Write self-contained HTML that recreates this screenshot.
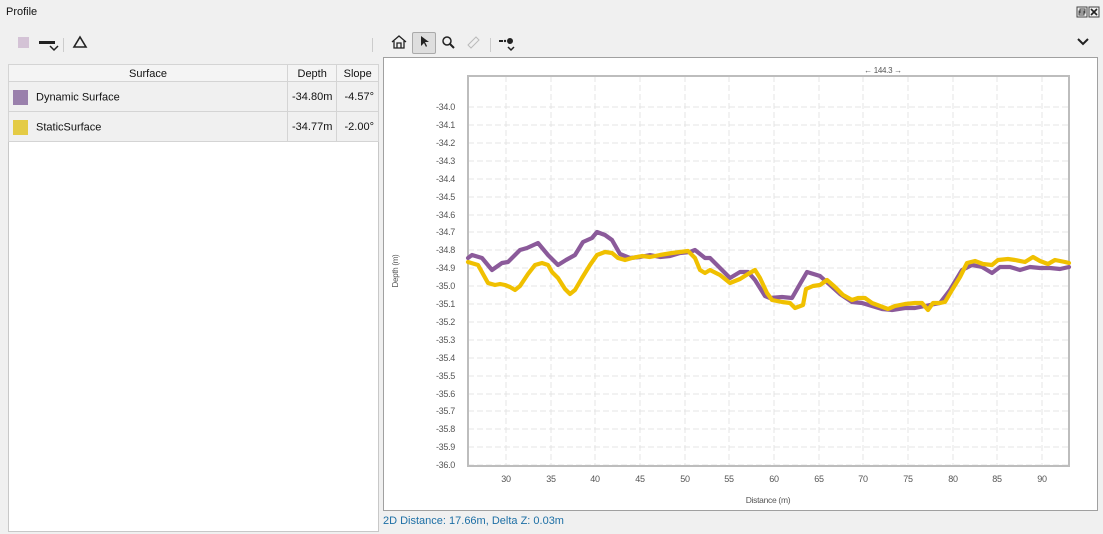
<!DOCTYPE html>
<html><head><style>
body{margin:0;width:1103px;height:534px;background:#f0f0f0;font-family:"Liberation Sans",sans-serif;position:relative;overflow:hidden;font-size:11px;color:#111}
.a{position:absolute}
table{border-collapse:collapse;font-size:11px}
td{border:1px solid #d4d4d4;padding:1px 4px 0}
</style></head><body>
<div class="a" style="left:6px;top:6px;font-size:11px">Profile</div>
<svg class="a" style="left:1076px;top:6px" width="26" height="12"><rect x="1" y="1" width="10" height="10" fill="none" stroke="#444"/><rect x="3" y="5" width="5" height="4" fill="none" stroke="#444"/><rect x="4" y="3" width="5" height="4" fill="none" stroke="#444"/><rect x="13" y="1" width="10" height="10" fill="none" stroke="#444"/><path d="M15 3l6 6M21 3l-6 6" stroke="#222" stroke-width="1.6"/></svg>
<div class="a" style="left:18px;top:37px;width:11px;height:11px;background:#d4c3d6"></div>
<div class="a" style="left:39px;top:41px;width:16px;height:3px;background:#222"></div>
<svg class="a" style="left:49px;top:45px" width="10" height="7"><path d="M1 1l4 4 4-4" fill="none" stroke="#222" stroke-width="1.5"/></svg>
<div class="a" style="left:63px;top:38px;width:1px;height:14px;background:#ccc"></div>
<svg class="a" style="left:72px;top:35px" width="16" height="14"><path d="M8 2L2 12h12z" fill="none" stroke="#222" stroke-width="1.6"/></svg>
<div class="a" style="left:372px;top:38px;width:1px;height:14px;background:#ccc"></div>
<svg class="a" style="left:390px;top:34px" width="18" height="16"><path d="M2 8L9 2l7 6M4 7v7h10V7M7 14V9h4v5" fill="none" stroke="#222" stroke-width="1.3"/></svg>
<div class="a" style="left:412px;top:32px;width:22px;height:20px;border:1px solid #aaa;border-radius:2px;background:#dedede"></div>
<svg class="a" style="left:418px;top:35px" width="12" height="14"><path d="M3 1v10l3-3 2 4 1-1-2-4h4z" fill="#222"/></svg>
<svg class="a" style="left:441px;top:35px" width="14" height="14"><circle cx="6" cy="6" r="4" fill="none" stroke="#222" stroke-width="1.5"/><path d="M9 9l4 4" stroke="#222" stroke-width="2"/></svg>
<svg class="a" style="left:465px;top:34px" width="16" height="16"><path d="M3 11l8-8 3 3-8 8z" fill="none" stroke="#bbb"/></svg>
<div class="a" style="left:490px;top:38px;width:1px;height:14px;background:#ccc"></div>
<svg class="a" style="left:498px;top:35px" width="20" height="18"><path d="M1 6h4" stroke="#222" stroke-width="2"/><circle cx="7" cy="6" r="1.2" fill="#222"/><circle cx="12" cy="6" r="3" fill="#222"/><path d="M10 12l3 3 3-3" fill="none" stroke="#222" stroke-width="1.5"/></svg>
<svg class="a" style="left:1077px;top:38px" width="12" height="8"><path d="M1 1l5 5 5-5" fill="none" stroke="#222" stroke-width="2"/></svg>
<div class="a" style="left:8px;top:64px;width:369px;height:466px;background:#fff;border:1px solid #c8c8c8"></div>
<table class="a" style="left:8px;top:64px;width:371px">
<tr style="height:17px;background:#f4f4f4"><td style="text-align:center;width:270px">Surface</td><td style="text-align:center;width:38px">Depth</td><td style="text-align:center">Slope</td></tr>
<tr style="height:30px;background:#f0f0f0"><td><span style="display:inline-block;width:15px;height:15px;background:#9a80ac;vertical-align:middle;margin:0 8px 0 0"></span>Dynamic Surface</td><td>-34.80m</td><td style="text-align:right">-4.57°</td></tr>
<tr style="height:30px;background:#f0f0f0"><td><span style="display:inline-block;width:15px;height:15px;background:#e4cb45;vertical-align:middle;margin:0 8px 0 0"></span>StaticSurface</td><td>-34.77m</td><td style="text-align:right">-2.00°</td></tr>
</table>
<svg class="a" style="left:383px;top:57px" width="716" height="455" viewBox="383 57 716 455" font-family="Liberation Sans,sans-serif">
<rect x="383.5" y="57.5" width="714" height="453" fill="#fff" stroke="#a0a0a0"/>
<g stroke="#e4e4e4" stroke-dasharray="6 3">
<path d="M468 107H1069M468 125H1069M468 143H1069M468 161H1069M468 179H1069M468 197H1069M468 215H1069M468 232H1069M468 250H1069M468 268H1069M468 286H1069M468 304H1069M468 322H1069M468 340H1069M468 358H1069M468 376H1069M468 394H1069M468 411H1069M468 429H1069M468 447H1069M468 465H1069"/>
<path d="M506 76V466M551 76V466M595 76V466M640 76V466M685 76V466M729 76V466M774 76V466M819 76V466M863 76V466M908 76V466M953 76V466M997 76V466M1042 76V466"/>
</g>
<path d="M468 76H1069V466H468Z" fill="none" stroke="#bdbdbd" stroke-width="2"/>
<g font-size="9" fill="#555" text-anchor="end" letter-spacing="-0.3">
<text x="455" y="110">-34.0</text><text x="455" y="128">-34.1</text><text x="455" y="146">-34.2</text><text x="455" y="164">-34.3</text><text x="455" y="182">-34.4</text><text x="455" y="200">-34.5</text><text x="455" y="218">-34.6</text><text x="455" y="235">-34.7</text><text x="455" y="253">-34.8</text><text x="455" y="271">-34.9</text><text x="455" y="289">-35.0</text><text x="455" y="307">-35.1</text><text x="455" y="325">-35.2</text><text x="455" y="343">-35.3</text><text x="455" y="361">-35.4</text><text x="455" y="379">-35.5</text><text x="455" y="397">-35.6</text><text x="455" y="414">-35.7</text><text x="455" y="432">-35.8</text><text x="455" y="450">-35.9</text><text x="455" y="468">-36.0</text>
</g>
<g font-size="9" fill="#555" text-anchor="middle" letter-spacing="-0.3">
<text x="506" y="482">30</text><text x="551" y="482">35</text><text x="595" y="482">40</text><text x="640" y="482">45</text><text x="685" y="482">50</text><text x="729" y="482">55</text><text x="774" y="482">60</text><text x="819" y="482">65</text><text x="863" y="482">70</text><text x="908" y="482">75</text><text x="953" y="482">80</text><text x="997" y="482">85</text><text x="1042" y="482">90</text>
<text x="768" y="503" font-size="8.5">Distance (m)</text>
<text x="883" y="73" font-size="8">← 144.3 →</text>
<text transform="translate(398 271) rotate(-90)" font-size="8">Depth (m)</text>
</g>
<polyline fill="none" stroke="#8b5a9a" stroke-width="4.2" stroke-linejoin="round" stroke-linecap="round" points="468,258 472,255 482,258 492,270 502,263 508,262 520,250 527,248 538,243 548,255 558,265 566,260 575,255 583,242 592,238 597,232 605,235 612,240 620,254 630,258 640,257 650,255 660,257 670,256 680,253 690,252 695,250 705,258 710,258 720,268 730,278 740,272 748,272 755,280 765,296 770,298 782,297 792,298 800,284 807,272 820,276 830,285 840,294 852,302 862,303 872,306 882,309 892,310 905,308 915,308 925,306 940,303 950,290 962,270 972,265 982,267 992,273 1000,267 1010,267 1020,270 1030,267 1040,268 1050,268 1060,269 1069,267"/>
<polyline fill="none" stroke="#f0c000" stroke-width="4.2" stroke-linejoin="round" stroke-linecap="round" points="468,262 478,265 488,283 495,285 500,284 505,285 510,287 515,290 520,286 528,274 535,265 542,263 548,265 552,272 558,278 565,289 570,294 575,290 582,278 590,265 597,255 605,252 612,253 618,258 625,260 632,258 642,256 650,257 660,255 672,253 688,251 695,258 700,270 705,273 710,270 720,275 730,283 740,279 748,274 755,270 760,278 767,293 772,300 782,302 790,303 795,308 803,305 806,289 813,286 820,285 827,280 835,287 843,295 852,300 858,298 865,298 872,303 880,306 888,309 895,306 905,304 915,303 922,303 928,310 933,303 940,303 945,302 952,290 960,277 967,263 975,261 983,264 992,265 998,260 1008,259 1015,260 1025,262 1033,257 1040,261 1048,264 1055,260 1065,262 1069,263"/>
</svg>
<div class="a" style="left:383px;top:515px;color:#1d6fa5;font-size:11px">2D Distance: 17.66m, Delta Z: 0.03m</div>
</body></html>
